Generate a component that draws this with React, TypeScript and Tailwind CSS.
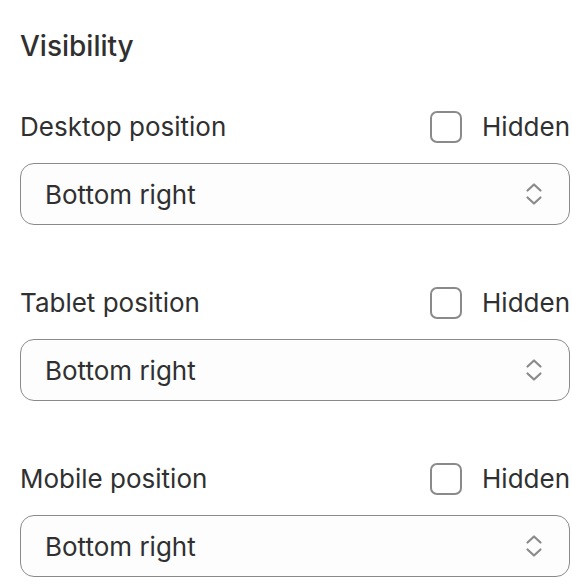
import React, { useState } from 'react';

// Position options shared by each device row
const OPTIONS = ['Bottom right', 'Bottom left', 'Top right', 'Top left'];

function UpDownIcon() {
  return (
    <svg width="18" height="26" viewBox="0 0 18 26" fill="none" className="text-[#8a8a8a]">
      <path d="M2.5 9.5L9 3.5L15.5 9.5" stroke="currentColor" strokeWidth="2.2" strokeLinecap="round" strokeLinejoin="round" />
      <path d="M2.5 16.5L9 22.5L15.5 16.5" stroke="currentColor" strokeWidth="2.2" strokeLinecap="round" strokeLinejoin="round" />
    </svg>
  );
}

function PositionRow({ label }: { label: string }) {
  const [hidden, setHidden] = useState(false);
  const [value, setValue] = useState(OPTIONS[0]);

  return (
    <div className="flex flex-col gap-5">
      <div className="flex items-center justify-between h-8">
        <span className="text-[26px] leading-8 text-[#303030]">{label}</span>
        <label className="flex items-center gap-[20px] cursor-pointer">
          <span
            onClick={() => setHidden(!hidden)}
            className={`w-8 h-8 rounded-[7px] border-2 ${hidden ? 'bg-[#303030] border-[#303030]' : 'bg-white border-[#8a8a8a]'}`}
          />
          <span className="text-[26px] leading-8 text-[#303030]">Hidden</span>
        </label>
      </div>
      <div className="relative">
        <select
          value={value}
          onChange={(e) => setValue(e.target.value)}
          className="appearance-none w-full h-[62px] rounded-[14px] border-[1.5px] border-[#8a8a8a] bg-[#fdfdfd] pl-6 pr-14 text-[26px] text-[#303030] outline-none"
        >
          {OPTIONS.map((o) => (
            <option key={o}>{o}</option>
          ))}
        </select>
        <div className="pointer-events-none absolute right-[27px] top-1/2 -translate-y-1/2">
          <UpDownIcon />
        </div>
      </div>
    </div>
  );
}

export default function App() {
  return (
    <div
      className="w-[572px] h-[588px] bg-white pl-5 pr-[2px] pt-[30px]"
      style={{ fontFamily: 'Inter, "Noto Sans", sans-serif' }}
    >
      <h2 className="text-[28px] leading-8 font-medium text-[#303030]">Visibility</h2>
      <div className="mt-[49px] flex flex-col gap-[62px]">
        <PositionRow label="Desktop position" />
        <PositionRow label="Tablet position" />
        <PositionRow label="Mobile position" />
      </div>
    </div>
  );
}
